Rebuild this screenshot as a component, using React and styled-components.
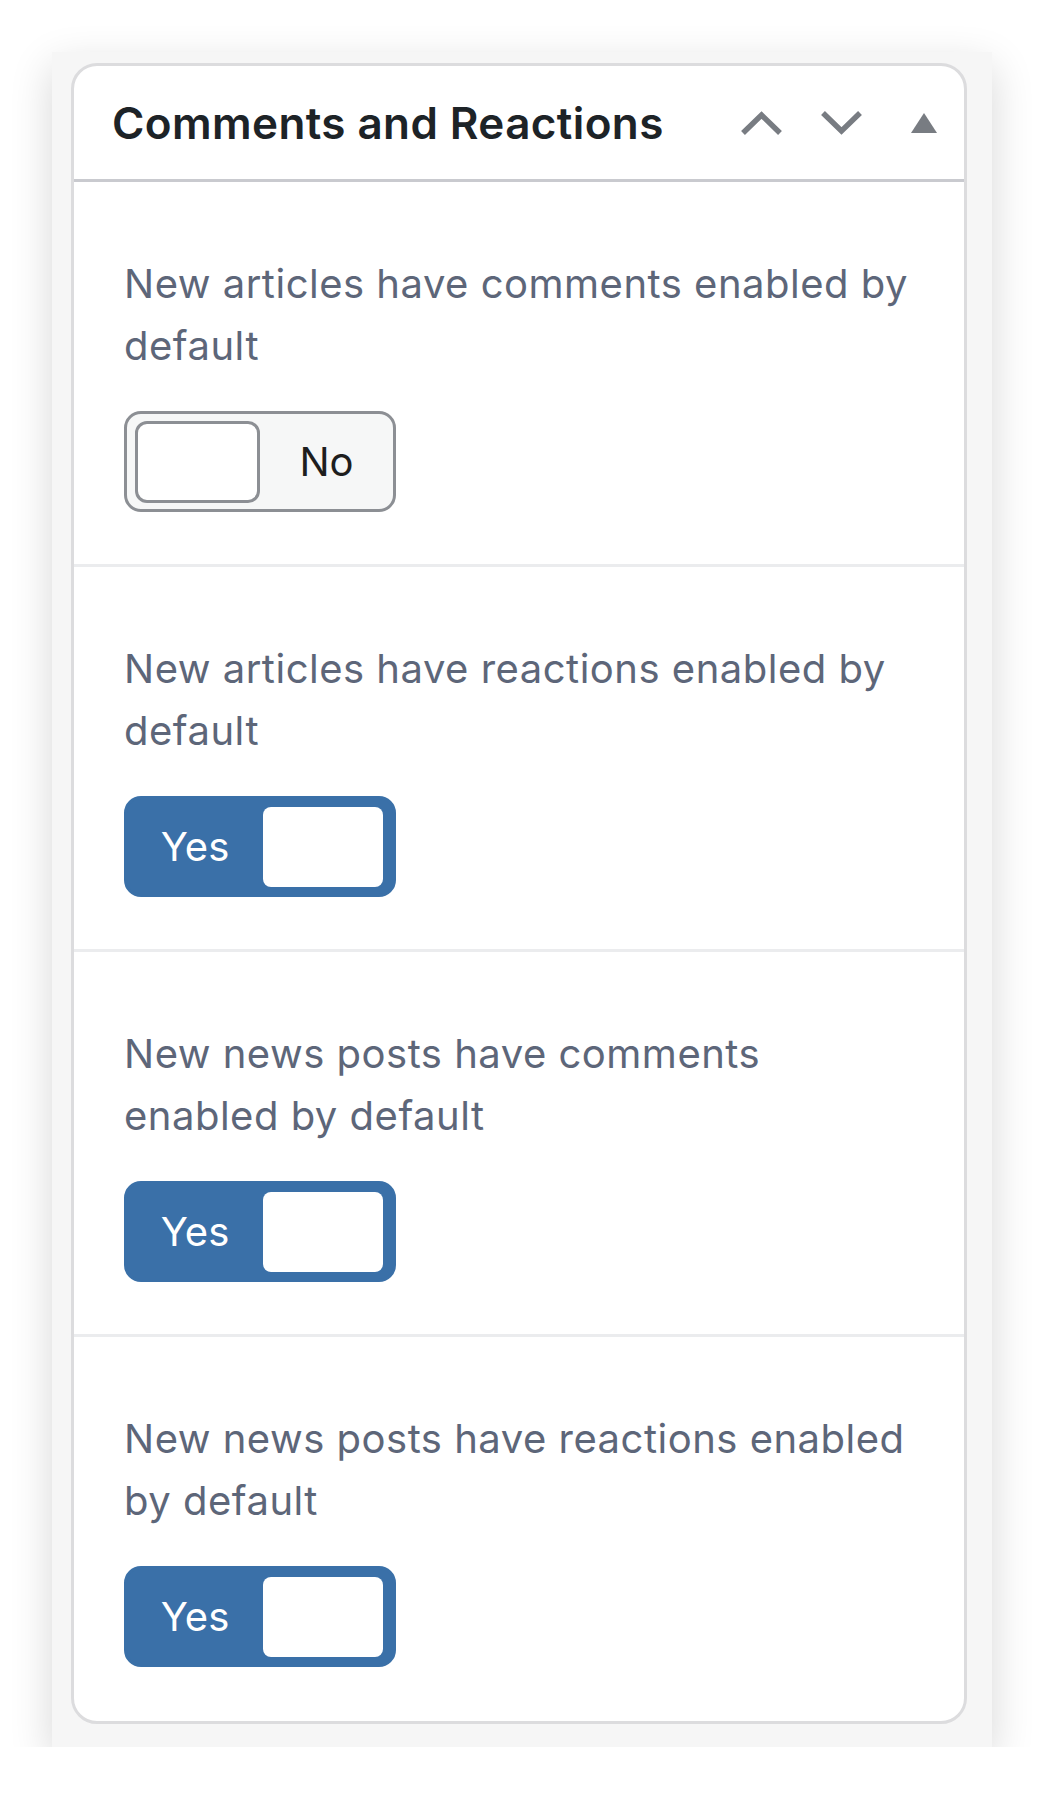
import styled, { createGlobalStyle } from "styled-components";

const Global = createGlobalStyle`
  html, body {
    margin: 0;
    padding: 0;
    background: #ffffff;
  }
  body {
    font-family: Inter, "Noto Sans", "Liberation Sans", sans-serif;
  }
`;

const Frame = styled.div`
  margin: 52px 0 0 52px;
  width: 940px;
  box-sizing: border-box;
  padding: 11px 25px 23px 19px;
  background: #f6f6f6;
  box-shadow: 0 14px 40px rgba(0, 0, 0, 0.16);
`;

const Card = styled.section`
  background: #ffffff;
  border: 3px solid #dcdcde;
  border-radius: 26px;
  overflow: hidden;
`;

const Header = styled.header`
  display: flex;
  align-items: center;
  height: 113px;
  padding: 0 26px 0 38px;
  border-bottom: 3px solid #c9cacf;
`;

const Title = styled.h2`
  flex: 1;
  margin: 0;
  font-size: 44px;
  font-weight: 600;
  color: #1d2327;
  letter-spacing: 0.4px;
`;

const Actions = styled.div`
  display: flex;
  align-items: center;
  gap: 37px;
`;

const IconButton = styled.button`
  display: flex;
  align-items: center;
  justify-content: center;
  margin-left: ${(p) => p.$extra || 0}px;
  padding: 0;
  border: 0;
  background: none;
  color: #787c82;
  cursor: pointer;
`;

const Setting = styled.div`
  display: flex;
  flex-direction: column;
  align-items: flex-start;
  padding: 71px 50px 52px 50px;
  & + & {
    border-top: 3px solid #ebecee;
  }
  &:last-child {
    padding-bottom: 54px;
  }
`;

const Label = styled.p`
  margin: 0 0 34px;
  font-size: 40px;
  line-height: 62px;
  color: #5d6679;
  letter-spacing: 0.5px;
`;

const Toggle = styled.button`
  display: flex;
  align-items: center;
  flex-direction: ${(p) => (p.$on ? "row" : "row-reverse")};
  justify-content: space-between;
  box-sizing: border-box;
  width: 272px;
  height: 101px;
  padding: ${(p) => (p.$on ? "0 10px 0 0" : "0 0 0 8px")};
  border: 3px solid ${(p) => (p.$on ? "#3a70a8" : "#8c8f94")};
  border-radius: 17px;
  background: ${(p) => (p.$on ? "#3a70a8" : "#f6f7f7")};
  cursor: pointer;
  font-family: inherit;
`;

const ToggleText = styled.span`
  flex: 1;
  text-align: center;
  font-size: 40px;
  color: ${(p) => (p.$on ? "#ffffff" : "#1e1e1e")};
`;

const Knob = styled.span`
  box-sizing: border-box;
  width: ${(p) => (p.$on ? "120px" : "125px")};
  height: ${(p) => (p.$on ? "80px" : "82px")};
  background: #ffffff;
  border: ${(p) => (p.$on ? "0" : "3px solid #8c8f94")};
  border-radius: ${(p) => (p.$on ? "8px" : "12px")};
`;

const ChevronUp = () => (
  <svg width="43" height="26" viewBox="0 0 43 26">
    <path d="M3 23 L21.5 5 L40 23" fill="none" stroke="currentColor" strokeWidth="5.5" />
  </svg>
);

const ChevronDown = () => (
  <svg width="43" height="26" viewBox="0 0 43 26">
    <path d="M3 3 L21.5 21 L40 3" fill="none" stroke="currentColor" strokeWidth="5.5" />
  </svg>
);

const Caret = () => (
  <svg width="28" height="20" viewBox="0 0 28 20">
    <path d="M14 0 L27 20 L1 20 Z" fill="currentColor" />
  </svg>
);

const settings = [
  { label: "New articles have comments enabled by default", on: false },
  { label: "New articles have reactions enabled by default", on: true },
  { label: "New news posts have comments enabled by default", on: true },
  { label: "New news posts have reactions enabled by default", on: true },
];

export default function App() {
  return (
    <>
      <Global />
      <Frame>
        <Card>
          <Header>
            <Title>Comments and Reactions</Title>
            <Actions>
              <IconButton aria-label="Move up">
                <ChevronUp />
              </IconButton>
              <IconButton aria-label="Move down">
                <ChevronDown />
              </IconButton>
              <IconButton aria-label="Toggle panel" $extra={10}>
                <Caret />
              </IconButton>
            </Actions>
          </Header>
          {settings.map((s) => (
            <Setting key={s.label}>
              <Label>{s.label}</Label>
              <Toggle $on={s.on}>
                <ToggleText $on={s.on}>{s.on ? "Yes" : "No"}</ToggleText>
                <Knob $on={s.on} />
              </Toggle>
            </Setting>
          ))}
        </Card>
      </Frame>
    </>
  );
}
